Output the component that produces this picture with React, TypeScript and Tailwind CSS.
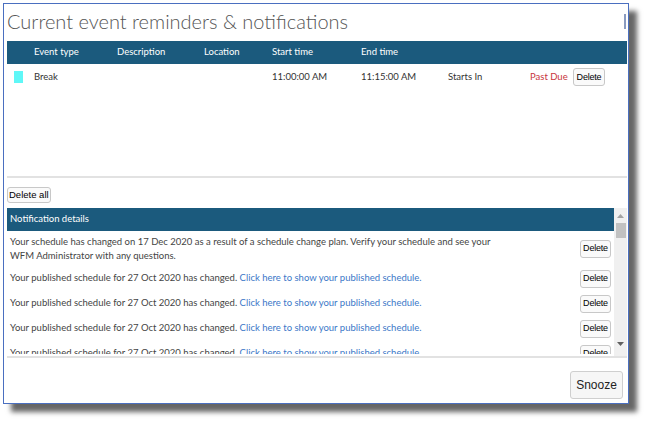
import { ReactNode } from "react";

const body = "font-['Lato',sans-serif]";
const btn = "font-['Liberation_Sans',Arial,sans-serif]";

const DeleteButton = ({ className = "" }: { className?: string }) => (
  <button
    className={`${btn} h-[18px] w-[31px] shrink-0 rounded-[3px] border border-[#c8c8c8] bg-[#fafafa] px-0 text-[9px] leading-none tracking-[-0.2px] text-black ${className}`}
  >
    Delete
  </button>
);

const Col = ({ w, children, className = "" }: { w: string; children?: ReactNode; className?: string }) => (
  <div className={`${w} shrink-0 ${className}`}>{children}</div>
);

const published = Array.from({ length: 4 });

export default function App() {
  return (
    <div className="h-[427px] w-[652px] bg-white pl-[3px] pt-[3px]">
      {/* window */}
      <div className="flex h-[401px] w-[626px] flex-col border border-[#4a6fc0] bg-white pl-[3px] pr-px shadow-[8px_8px_5px_rgba(0,0,0,0.6)]">
        {/* title */}
        <div className="flex h-[37px] shrink-0 items-start justify-between">
          <h1 className={`${body} pt-[4px] text-[20px] font-light leading-[26px] text-[#555]`}>
            Current event reminders &amp; notifications
          </h1>
          <div className="mr-px mt-[10px] h-[15px] w-[2px] bg-[#8a9bc0]" />
        </div>

        {/* reminders table */}
        <div className={`${body} text-[9.5px] text-[#333]`}>
          <div className="flex h-[23px] items-center bg-[#1b5a7d] text-white">
            <Col w="w-[27px]" />
            <Col w="w-[83px]">Event type</Col>
            <Col w="w-[87px]">Description</Col>
            <Col w="w-[68px]">Location</Col>
            <Col w="w-[89px]">Start time</Col>
            <Col w="w-[87px]">End time</Col>
          </div>
          <div className="flex h-[26px] items-center">
            <Col w="w-[27px]" className="pl-[7px]">
              <div className="h-[12px] w-[9px] bg-[#5ff7f7]" />
            </Col>
            <Col w="w-[83px]">Break</Col>
            <Col w="w-[87px]" />
            <Col w="w-[68px]" />
            <Col w="w-[89px]">11:00:00 AM</Col>
            <Col w="w-[87px]">11:15:00 AM</Col>
            <Col w="w-[82px]">Starts In</Col>
            <Col w="w-[43px]" className="text-[#c8343c]">Past Due</Col>
            <DeleteButton className="w-[32px]" />
          </div>
        </div>

        <div className="mt-[86px] h-[2px] shrink-0 bg-[#e2e2e2]" />

        <div className="mt-[9px] flex shrink-0">
          <button
            className={`${btn} h-[16px] rounded-[3px] border border-[#c8c8c8] bg-[#fafafa] px-px text-[9.5px] leading-none text-black`}
          >
            Delete all
          </button>
        </div>

        {/* notification list */}
        <div className="mt-[5px] flex h-[148px] shrink-0 items-start">
          <div className={`${body} h-[146px] flex-1 overflow-hidden text-[9.5px] text-[#444]`}>
            <div className="flex h-[23px] items-center bg-[#1b5a7d] pl-[3px] text-white">Notification details</div>
            <div className="flex h-[35px] items-center justify-between pl-[3px] pr-[3px]">
              <p className="w-[500px] leading-[14px]">
                Your schedule has changed on 17 Dec 2020 as a result of a schedule change plan. Verify your schedule and
                see your WFM Administrator with any questions.
              </p>
              <DeleteButton />
            </div>
            {[...published, 0].map((_, i) => (
              <div key={i} className="flex h-[25px] items-center justify-between pl-[3px] pr-[3px]">
                <p>
                  Your published schedule for 27 Oct 2020 has changed.{" "}
                  <span className="text-[#3b78c8]">Click here to show your published schedule.</span>
                </p>
                <DeleteButton />
              </div>
            ))}
          </div>
          {/* scrollbar */}
          <div className="flex h-full w-[13px] shrink-0 flex-col items-center bg-[#f0f0f0]">
            <svg width="7" height="4" viewBox="0 0 7 4" className="mt-[6px]">
              <path d="M3.5 0 L7 4 L0 4 Z" fill="#a3a3a3" />
            </svg>
            <div className="mt-[5px] h-[15px] w-[10px] bg-[#c1c1c1]" />
            <div className="flex-1" />
            <svg width="7" height="4" viewBox="0 0 7 4" className="mb-[10px]">
              <path d="M0 0 L7 0 L3.5 4 Z" fill="#606060" />
            </svg>
          </div>
        </div>

        <div className="h-[2px] shrink-0 bg-[#e2e2e2]" />

        {/* footer */}
        <div className="flex flex-1 items-start justify-end pr-[4px] pt-[13px]">
          <button
            className={`${btn} h-[28px] w-[53px] rounded-[3px] border border-[#cfcfcf] bg-[#f6f6f6] text-[12px] text-[#222]`}
          >
            Snooze
          </button>
        </div>
      </div>
    </div>
  );
}
